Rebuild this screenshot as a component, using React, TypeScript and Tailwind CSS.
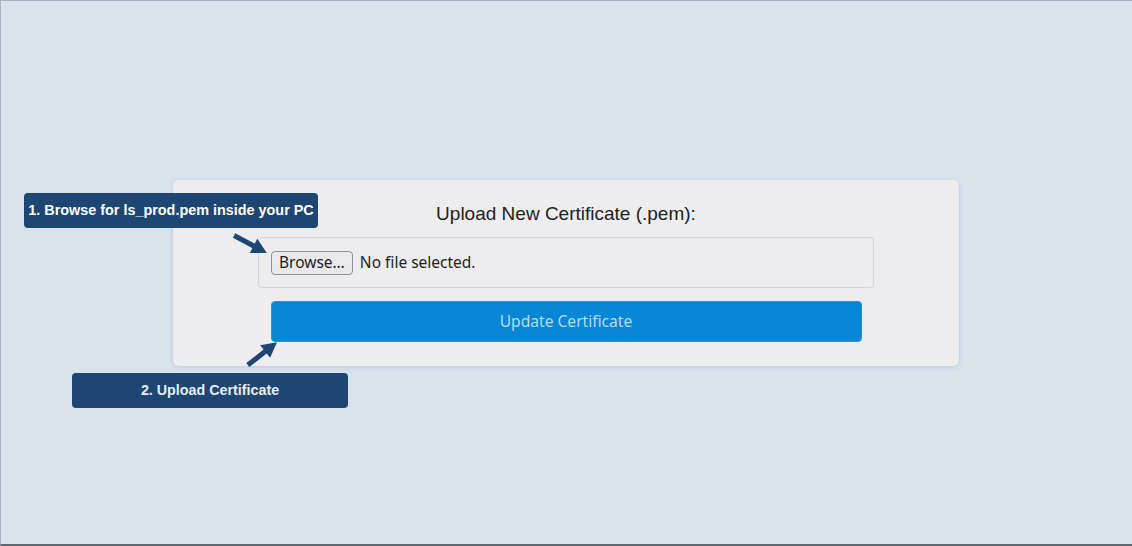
import { useState } from "react";

const Arrow = ({ rotate }: { rotate: number }) => (
  <svg width="40" height="18" viewBox="0 0 40 18" style={{ transform: `rotate(${rotate}deg)` }}>
    <line x1="2" y1="9" x2="28" y2="9" stroke="#1d4673" strokeWidth="5" strokeLinecap="butt" />
    <polygon points="24,1 39,9 24,17" fill="#1d4673" />
  </svg>
);

const App = () => {
  const [fileName, setFileName] = useState<string | null>(null);

  return (
    <div className="w-[1132px] h-[546px] bg-[#d9e3ec] border-t border-l border-b-2 border-t-[#a9b3be] border-l-[#a9b3be] border-b-[#5f6770] flex items-center justify-center relative overflow-hidden">
      {/* Card */}
      <div className="mr-[1px] w-[786px] h-[186px] bg-[#edecef] rounded-md shadow-[0_1px_4px_rgba(60,80,110,0.18)] flex flex-col items-center pt-[21px]">
        <h2 className="text-[19px] leading-[25px] text-[#222] font-['Liberation_Sans',Arial,sans-serif]">
          Upload New Certificate (.pem):
        </h2>
        <label className="mt-[11px] w-[616px] h-[51px] border border-[#d6d4d8] rounded-[4px] flex items-center pl-[12px] pt-[1px] gap-[7px] font-['Noto_Sans',sans-serif] text-[15.5px] text-[#1e1e1e]">
          <span className="h-[24px] px-[7px] pt-[1px] flex items-center border border-[#8f8f9d] rounded-[4px] bg-[#e9e9ed] leading-none">
            Browse…
          </span>
          <span className="pt-[1px]">{fileName ?? "No file selected."}</span>
          <input
            type="file"
            className="hidden"
            onChange={(e) => setFileName(e.target.files?.[0]?.name ?? null)}
          />
        </label>
        <button className="mt-[13px] w-[591px] h-[41px] pt-[2px] bg-[#0686d4] rounded-[4px] border border-[#2a96dc] text-[#b9dcf3] text-[15.6px] font-['Noto_Sans',sans-serif]">
          Update Certificate
        </button>
      </div>

      {/* Callout 1 */}
      <div className="absolute left-[23px] top-[192px] w-[294px] h-[35px] bg-[#1d4673] rounded-[4px] flex items-center justify-center text-white font-bold text-[14.4px] font-['Liberation_Sans',Arial,sans-serif]">
        1. Browse for ls_prod.pem inside your PC
      </div>
      <div className="absolute left-[229px] top-[234px]">
        <Arrow rotate={28} />
      </div>

      {/* Callout 2 */}
      <div className="absolute left-[71px] top-[372px] w-[276px] h-[35px] bg-[#1d4673] rounded-[4px] flex items-center justify-center text-[#e8edf3] font-bold text-[14.3px] font-['Liberation_Sans',Arial,sans-serif]">
        2. Upload Certificate
      </div>
      <div className="absolute left-[241px] top-[344px]">
        <Arrow rotate={-38} />
      </div>
    </div>
  );
};

export default App;
